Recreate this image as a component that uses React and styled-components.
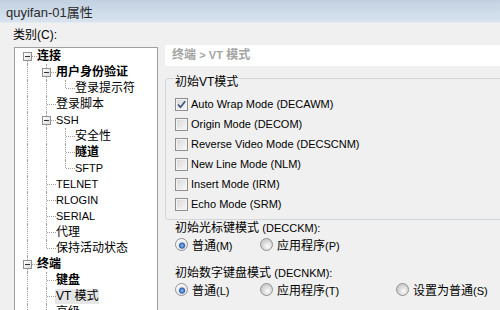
import styled, { createGlobalStyle } from 'styled-components';

const GlobalStyle = createGlobalStyle`
  html, body {
    margin: 0;
    padding: 0;
    background: #f0f0f0;
  }
  body {
    font-family: "Liberation Sans", "Noto Sans CJK SC", sans-serif;
    font-size: 12px;
    color: #000;
  }
`;

const treeRows = [
    { text: '连接', level: 0, bold: true, open: true, guides: ['bottom'] },
    { text: '用户身份验证', level: 1, bold: true, open: true, guides: ['full', 'full'] },
    { text: '登录提示符', level: 2, guides: ['full', 'full', 'top'] },
    { text: '登录脚本', level: 1, guides: ['full', 'full'] },
    { text: 'SSH', level: 1, open: true, latin: true, guides: ['full', 'full'] },
    { text: '安全性', level: 2, guides: ['full', 'full', 'full'] },
    { text: '隧道', level: 2, bold: true, guides: ['full', 'full', 'full'] },
    { text: 'SFTP', level: 2, latin: true, guides: ['full', 'full', 'top'] },
    { text: 'TELNET', level: 1, latin: true, guides: ['full', 'full'] },
    { text: 'RLOGIN', level: 1, latin: true, guides: ['full', 'full'] },
    { text: 'SERIAL', level: 1, latin: true, guides: ['full', 'full'] },
    { text: '代理', level: 1, guides: ['full', 'full'] },
    { text: '保持活动状态', level: 1, guides: ['full', 'top'] },
    { text: '终端', level: 0, bold: true, open: true, guides: ['full'] },
    { text: '键盘', level: 1, bold: true, guides: ['full', 'full'] },
    { text: 'VT 模式', level: 1, selected: true, guides: ['full', 'full'] },
    { text: '高级', level: 1, guides: ['full', 'top'] },
];

const modes = [
    { label: 'Auto Wrap Mode (DECAWM)', checked: true },
    { label: 'Origin Mode (DECOM)' },
    { label: 'Reverse Video Mode (DECSCNM)' },
    { label: 'New Line Mode (NLM)' },
    { label: 'Insert Mode (IRM)' },
    { label: 'Echo Mode (SRM)' },
];

function App() {
    return (
        <>
            <GlobalStyle />
            <Window>
                <TitleBar>quyifan-01属性</TitleBar>
                <CategoryLabel>类别(C):</CategoryLabel>
                <Main>
                    <Tree>
                        {treeRows.map((r) => (
                            <TreeRow key={r.text}>
                                {r.guides.map((g, i) => (
                                    <Guide key={i} $line={g} $stub={i === r.level}>
                                        {i === r.level && r.open && <Expander />}
                                    </Guide>
                                ))}
                                <NodeText $bold={r.bold} $selected={r.selected} $latin={r.latin}>
                                    {r.text}
                                </NodeText>
                            </TreeRow>
                        ))}
                    </Tree>
                    <RightPane>
                        <Header>
                            终端 <Latin>&gt; VT</Latin> 模式
                        </Header>
                        <Group>
                            <Legend>初始VT模式</Legend>
                            {modes.map((m) => (
                                <CheckRow key={m.label}>
                                    <CheckBox>
                                        {m.checked && (
                                            <svg width="11" height="11" viewBox="0 0 11 11">
                                                <path
                                                    d="M2 5.5 L4.5 8.2 L9.2 2.2"
                                                    fill="none"
                                                    stroke="#3f5389"
                                                    strokeWidth="1.7"
                                                />
                                            </svg>
                                        )}
                                    </CheckBox>
                                    <Latin>{m.label}</Latin>
                                </CheckRow>
                            ))}
                        </Group>
                        <Section>
                            <SectionLabel>
                                初始光标键模式 <Latin>(DECCKM):</Latin>
                            </SectionLabel>
                            <RadioRow>
                                <RadioItem>
                                    <Radio $on />
                                    <span>
                                        普通<Latin>(M)</Latin>
                                    </span>
                                </RadioItem>
                                <RadioItem>
                                    <Radio />
                                    <span>
                                        应用程序<Latin>(P)</Latin>
                                    </span>
                                </RadioItem>
                            </RadioRow>
                        </Section>
                        <Section $gap={12}>
                            <SectionLabel>
                                初始数字键盘模式 <Latin>(DECNKM):</Latin>
                            </SectionLabel>
                            <RadioRow>
                                <RadioItem>
                                    <Radio $on />
                                    <span>
                                        普通<Latin>(L)</Latin>
                                    </span>
                                </RadioItem>
                                <RadioItem>
                                    <Radio />
                                    <span>
                                        应用程序<Latin>(T)</Latin>
                                    </span>
                                </RadioItem>
                                <RadioItem>
                                    <Radio />
                                    <span>
                                        设置为普通<Latin>(S)</Latin>
                                    </span>
                                </RadioItem>
                            </RadioRow>
                        </Section>
                    </RightPane>
                </Main>
            </Window>
        </>
    );
}

const Window = styled.div`
    width: 500px;
    height: 310px;
    overflow: hidden;
    background: #f0f0f0;
    display: flex;
    flex-direction: column;
`;

const TitleBar = styled.div`
    height: 22px;
    flex-shrink: 0;
    background: linear-gradient(#c2d1e1, #d8e3ee);
    border-bottom: 1px solid #e4ebf3;
    display: flex;
    align-items: center;
    padding-left: 6px;
    font-size: 13px;
    color: #2a2a2a;
`;

const CategoryLabel = styled.div`
    margin: 5px 0 0 13px;
    line-height: 14px;
`;

const Main = styled.div`
    display: flex;
    align-items: flex-start;
    margin-top: 3px;
`;

const Tree = styled.div`
    box-sizing: border-box;
    width: 144px;
    height: 280px;
    margin: 2px 0 0 14px;
    padding-left: 3px;
    border: 1px solid #a0a0a0;
    background: #fff;
    flex-shrink: 0;
`;

const TreeRow = styled.div`
    display: flex;
    align-items: center;
    height: 16px;
`;

const Guide = styled.div`
    position: relative;
    width: 19px;
    height: 16px;
    flex-shrink: 0;
    display: flex;
    align-items: center;
    justify-content: center;
    &::before {
        content: '';
        position: absolute;
        left: 9px;
        top: ${(p) => (p.$line === 'bottom' ? '8px' : '0')};
        bottom: ${(p) => (p.$line === 'top' ? '8px' : '0')};
        border-left: 1px dotted #a0a0a0;
    }
    &::after {
        content: '';
        display: ${(p) => (p.$stub ? 'block' : 'none')};
        position: absolute;
        left: 10px;
        right: 0;
        top: 8px;
        border-top: 1px dotted #a0a0a0;
    }
`;

const Expander = styled.div`
    position: relative;
    z-index: 1;
    box-sizing: border-box;
    width: 9px;
    height: 9px;
    border: 1px solid #919191;
    background: linear-gradient(135deg, #ffffff, #dcdcdc);
    &::after {
        content: '';
        position: absolute;
        left: 1px;
        top: 3px;
        width: 5px;
        border-top: 1px solid #333;
    }
`;

const NodeText = styled.span`
    padding: 0 1px;
    margin-left: -1px;
    line-height: 15px;
    white-space: nowrap;
    font-size: ${(p) => (p.$latin ? '11px' : '12px')};
    font-weight: ${(p) => (p.$bold ? 'bold' : 'normal')};
    background: ${(p) => (p.$selected ? '#e6e6e6' : 'transparent')};
`;

const RightPane = styled.div`
    width: 345px;
    margin-left: 7px;
    flex-shrink: 0;
`;

const Header = styled.div`
    height: 21px;
    line-height: 21px;
    padding-left: 7px;
    background: #fff;
    color: #a4a4a4;
    font-weight: bold;
    white-space: nowrap;
`;

const Latin = styled.span`
    font-size: 11px;
`;

const Group = styled.fieldset`
    margin: 0;
    padding: 4px 0 5px 9px;
    border: 1px solid #d2d6da;
    border-radius: 3px;
`;

const Legend = styled.legend`
    padding: 8px 1px 0;
    margin-left: -1px;
    line-height: 16px;
`;

const CheckRow = styled.div`
    display: flex;
    align-items: center;
    gap: 3px;
    height: 20px;
    white-space: nowrap;
`;

const CheckBox = styled.div`
    box-sizing: border-box;
    width: 13px;
    height: 13px;
    border: 1px solid #8f8f8f;
    box-shadow: inset 0 0 0 1px #f4f4f4;
    background: linear-gradient(135deg, #d6d6d6, #fafafa);
    display: flex;
    align-items: center;
    justify-content: center;
`;

const Section = styled.div`
    margin-top: ${(p) => p.$gap || 0}px;
`;

const SectionLabel = styled.div`
    padding-left: 10px;
    line-height: 16px;
    white-space: nowrap;
`;

const RadioRow = styled.div`
    display: grid;
    grid-template-columns: 85px 136px auto;
    padding-left: 10px;
    height: 17px;
`;

const RadioItem = styled.div`
    display: flex;
    align-items: center;
    gap: 4px;
    white-space: nowrap;
`;

const Radio = styled.div`
    box-sizing: border-box;
    width: 13px;
    height: 13px;
    border-radius: 50%;
    border: 1px solid #8f8f8f;
    background: ${(p) =>
        p.$on
            ? 'radial-gradient(circle at 55% 60%, #8ec2f0 0, #2f62b4 2.6px, #e8e8e8 3.6px, #fafafa 6px)'
            : 'radial-gradient(circle at 60% 65%, #fbfbfb 0, #e2e2e2 3.5px, #cfcfcf 6px)'};
`;

export default App;
